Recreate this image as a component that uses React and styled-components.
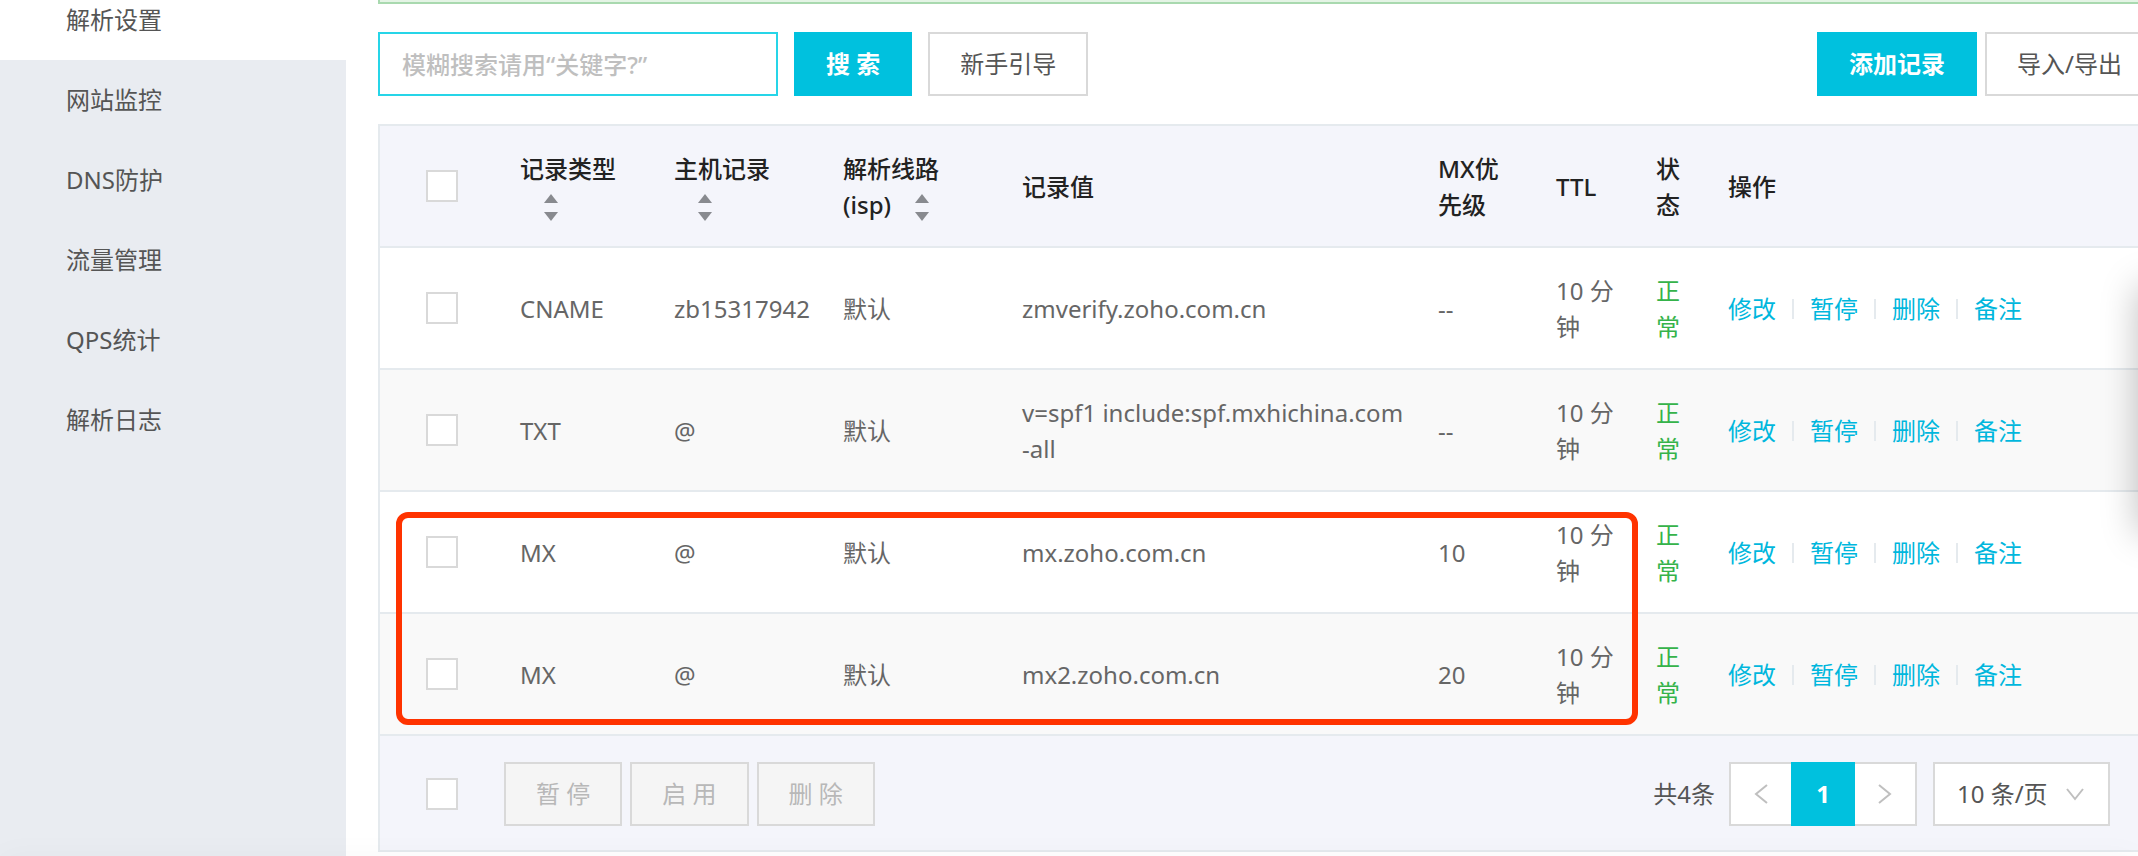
import React from 'react';
import styled, { createGlobalStyle } from 'styled-components';

const GlobalStyle = createGlobalStyle`
  * {
    box-sizing: border-box;
  }

  body {
    margin: 0;
    background: #fff;
    color: #666;
    font-family: 'Noto Sans', 'Noto Sans CJK SC', sans-serif;
    font-size: 24px;
    line-height: 36px;
  }

  button,
  input,
  select {
    font: inherit;
    color: inherit;
    margin: 0;
  }
`;

const Page = styled.div`
  display: flex;
  min-height: 100vh;
  overflow: hidden;
`;

const Sidebar = styled.nav`
  flex: 0 0 346px;
  margin-top: -20px;
  background: #e9ecf1;
`;

const SideLink = styled.a`
  display: flex;
  align-items: center;
  height: 80px;
  padding-left: 66px;
  color: #555;
  text-decoration: none;
  background: ${({ $active }) => ($active ? '#fff' : 'transparent')};
`;

const Main = styled.main`
  flex: 1;
  min-width: 0;
  margin-left: 32px;
  margin-right: -16px;
`;

const Notice = styled.div`
  height: 4px;
  background: #e4f4e5;
  border: 2px solid #a9d9af;
  border-top: 0;
`;

const Toolbar = styled.div`
  display: flex;
  align-items: center;
  gap: 16px;
  margin: 28px 0;
`;

const Spacer = styled.div`
  flex: 1;
`;

const SearchInput = styled.input`
  width: 400px;
  height: 64px;
  padding: 0 22px;
  border: 2px solid #26d5e8;
  background: #fff;
  outline: none;

  &::placeholder {
    color: #bfbfbf;
    font-weight: 500;
    opacity: 1;
  }
`;

const Button = styled.button`
  height: 64px;
  padding: 0 30px;
  border: 2px solid #d9d9d9;
  border-radius: 0;
  background: #fff;
  color: #555;
  white-space: nowrap;

  &:disabled {
    background: #f5f5f5;
    color: #b8b8b8;
  }
`;

const PrimaryButton = styled(Button)`
  border-color: #00c1de;
  background: #00c1de;
  color: #fff;
  font-weight: 700;
`;

const ButtonGroup = styled.div`
  display: flex;
  gap: 8px;
`;

const Records = styled.section`
  position: relative;
`;

const RecordTable = styled.table`
  width: 100%;
  table-layout: fixed;
  border-collapse: separate;
  border-spacing: 0;
  border: 2px solid #e5eaee;
  border-bottom: 0;
`;

const HeadCell = styled.th`
  height: 122px;
  padding: 2px 24px 0 16px;
  border-bottom: 2px solid #e5eaee;
  background: #f4f5fb;
  color: #222;
  font-weight: 500;
  text-align: left;

  &:first-child {
    padding-top: 0;
  }
`;

const Row = styled.tr`
  background: #fff;

  &:nth-child(even) {
    background: #f9f9f9;
  }
`;

const Cell = styled.td`
  height: 122px;
  padding: 2px 16px 0;
  border-bottom: 2px solid #e5eaee;
  color: ${({ $ok }) => ($ok ? '#35b34a' : 'inherit')};

  &:first-child {
    padding-top: 0;
  }
`;

const Checkbox = styled.input`
  display: block;
  appearance: none;
  width: 32px;
  height: 32px;
  margin-left: ${({ $inCell }) => ($inCell ? '30px' : '46px')};
  border: 2px solid #d9d9d9;
  background: #fff;
`;

const SortButton = styled.button`
  display: inline-block;
  width: 14px;
  height: 28px;
  margin-left: 24px;
  padding: 0;
  border: 0;
  background: none;
  vertical-align: middle;

  svg {
    display: block;
  }
`;

const Actions = styled.div`
  display: flex;
  align-items: center;
`;

const ActionLink = styled.a`
  color: #00b7dd;
  text-decoration: none;

  & + & {
    display: flex;
    align-items: center;
  }

  & + &::before {
    content: '';
    width: 2px;
    height: 20px;
    margin: 0 16px;
    background: #e5eaee;
  }
`;

const TableFooter = styled.div`
  display: flex;
  align-items: center;
  padding: 26px 42px 24px 0;
  border: 2px solid #e5eaee;
  border-top: 0;
  background: #f4f5fb;

  ${ButtonGroup} {
    margin-left: 46px;
  }
`;

const Total = styled.span`
  margin-right: 14px;
  color: #555;
`;

const Pager = styled.div`
  display: flex;
  margin-right: 16px;
`;

const PageButton = styled.button`
  display: flex;
  align-items: center;
  justify-content: center;
  width: 62px;
  height: 64px;
  padding: 0;
  border: 2px solid #d9d9d9;
  background: #fff;

  &:first-child {
    border-right: 0;
  }

  &:last-child {
    border-left: 0;
  }

  &[aria-current] {
    width: 64px;
    border-color: #00c1de;
    background: #00c1de;
    color: #fff;
    font-weight: 700;
  }
`;

const SizePicker = styled.div`
  position: relative;

  svg {
    position: absolute;
    right: 26px;
    top: 26px;
    pointer-events: none;
  }
`;

const SizeSelect = styled.select`
  appearance: none;
  width: 177px;
  height: 64px;
  padding: 0 22px;
  border: 2px solid #d9d9d9;
  border-radius: 0;
  background: #fff;
  color: #555;
`;

// marks the two MX rows
const Highlight = styled.div`
  position: absolute;
  left: 18px;
  top: 388px;
  width: 1242px;
  height: 213px;
  border: 6px solid #ff3300;
  border-radius: 12px;
  pointer-events: none;
`;

const SideDock = styled.aside`
  position: fixed;
  right: -60px;
  top: 286px;
  width: 60px;
  height: 248px;
  box-shadow: 0 0 36px rgba(0, 0, 0, 0.25);
`;

const BottomDock = styled.aside`
  position: fixed;
  left: 0;
  right: 0;
  bottom: -40px;
  height: 40px;
  box-shadow: 0 0 32px rgba(0, 0, 0, 0.03);
`;

const menu = ['解析设置', '网站监控', 'DNS防护', '流量管理', 'QPS统计', '解析日志'];

const columns = [
  { label: '记录类型', width: 154, sortable: true },
  { label: '主机记录', width: 169, sortable: true },
  { label: '解析线路(isp)', width: 179, sortable: true },
  { label: '记录值', width: 416 },
  { label: 'MX优先级', width: 118 },
  { label: 'TTL', width: 100 },
  { label: '状态', width: 72 },
  { label: '操作' },
];

const records = [
  { type: 'CNAME', host: 'zb15317942', value: 'zmverify.zoho.com.cn', mx: '--' },
  { type: 'TXT', host: '@', value: 'v=spf1 include:spf.mxhichina.com -all', mx: '--' },
  { type: 'MX', host: '@', value: 'mx.zoho.com.cn', mx: '10' },
  { type: 'MX', host: '@', value: 'mx2.zoho.com.cn', mx: '20' },
];

const actions = ['修改', '暂停', '删除', '备注'];

function Sorter({ label }) {
  return (
    <SortButton type="button" aria-label={`${label} 排序`}>
      <svg width="14" height="28" viewBox="0 0 14 28" fill="#888a8f">
        <path d="M7 0L14 9H0Z" />
        <path d="M7 27L0 18H14Z" />
      </svg>
    </SortButton>
  );
}

function Arrow({ d, width, height }) {
  return (
    <svg width={width} height={height} viewBox={`0 0 ${width} ${height}`} fill="none" stroke="#bfbfbf" strokeWidth="2">
      <path d={d} />
    </svg>
  );
}

function App() {
  return (
    <>
      <GlobalStyle />
      <Page>
        <Sidebar>
          {menu.map((item, i) => (
            <SideLink key={item} href="#" $active={i === 0}>
              {item}
            </SideLink>
          ))}
        </Sidebar>

        <Main>
          <Notice />
          <Toolbar>
            <SearchInput type="text" aria-label="搜索" placeholder="模糊搜索请用“关键字?”" />
            <PrimaryButton type="button">搜 索</PrimaryButton>
            <Button type="button">新手引导</Button>
            <Spacer />
            <ButtonGroup>
              <PrimaryButton type="button">添加记录</PrimaryButton>
              <Button type="button">导入/导出</Button>
            </ButtonGroup>
          </Toolbar>

          <Records>
            <RecordTable>
              <colgroup>
                <col width="124" />
                {columns.map((c) => (
                  <col key={c.label} width={c.width} />
                ))}
              </colgroup>
              <thead>
                <tr>
                  <HeadCell>
                    <Checkbox type="checkbox" aria-label="全选" $inCell />
                  </HeadCell>
                  {columns.map((c) => (
                    <HeadCell key={c.label}>
                      {c.label}
                      {c.sortable && <Sorter label={c.label} />}
                    </HeadCell>
                  ))}
                </tr>
              </thead>
              <tbody>
                {records.map((r) => (
                  <Row key={r.value}>
                    <Cell>
                      <Checkbox type="checkbox" aria-label={r.value} $inCell />
                    </Cell>
                    <Cell>{r.type}</Cell>
                    <Cell>{r.host}</Cell>
                    <Cell>默认</Cell>
                    <Cell>{r.value}</Cell>
                    <Cell>{r.mx}</Cell>
                    <Cell>10 分钟</Cell>
                    <Cell $ok>正常</Cell>
                    <Cell>
                      <Actions>
                        {actions.map((a) => (
                          <ActionLink key={a} href="#">
                            {a}
                          </ActionLink>
                        ))}
                      </Actions>
                    </Cell>
                  </Row>
                ))}
              </tbody>
            </RecordTable>

            <TableFooter>
              <Checkbox type="checkbox" aria-label="全选" />
              <ButtonGroup>
                <Button type="button" disabled>暂 停</Button>
                <Button type="button" disabled>启 用</Button>
                <Button type="button" disabled>删 除</Button>
              </ButtonGroup>
              <Spacer />
              <Total>共4条</Total>
              <Pager>
                <PageButton type="button" aria-label="上一页">
                  <Arrow width={14} height={20} d="M13 1L2 10L13 19" />
                </PageButton>
                <PageButton type="button" aria-current="page">1</PageButton>
                <PageButton type="button" aria-label="下一页">
                  <Arrow width={14} height={20} d="M1 1L12 10L1 19" />
                </PageButton>
              </Pager>
              <SizePicker>
                <SizeSelect aria-label="每页条数">
                  <option>10 条/页</option>
                </SizeSelect>
                <Arrow width={18} height={13} d="M1 1L9 11L17 1" />
              </SizePicker>
            </TableFooter>
            <Highlight />
          </Records>
        </Main>
      </Page>
      <SideDock />
      <BottomDock />
    </>
  );
}

export default App;
